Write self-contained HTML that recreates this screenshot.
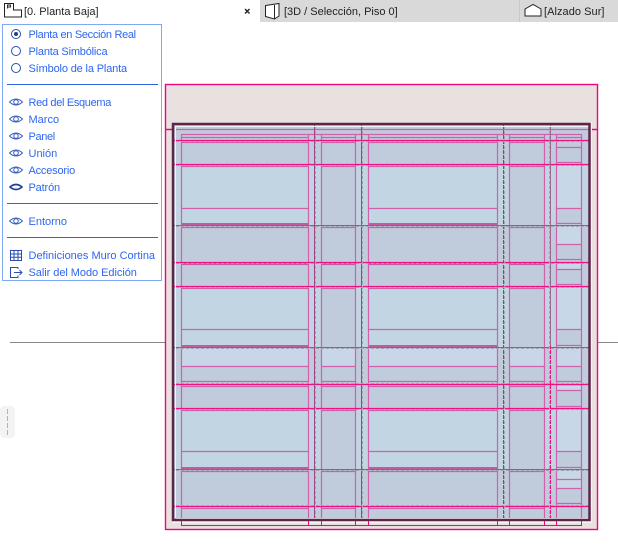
<!DOCTYPE html>
<html><head><meta charset="utf-8">
<style>
html,body{margin:0;padding:0;background:#fff;width:618px;height:559px;overflow:hidden}
body{position:relative;font-family:"Liberation Sans",sans-serif;font-size:11px}
.t{position:absolute;line-height:14px;white-space:nowrap}
.m{color:#2d66f0;left:28.5px}
.k{color:#222}
svg{position:absolute;left:0;top:0}
</style></head><body>
<svg width="618" height="559" viewBox="0 0 618 559" fill="none" shape-rendering="crispEdges">
<rect x="260" y="0" width="358" height="22" fill="#d9d9d9"/>
<rect x="519" y="0" width="1" height="22" fill="#c8c8c8"/>
<path d="M10 342.500H165M598 342.500H618" stroke="#888"/>
<rect x="165.500" y="84.500" width="432" height="445" fill="#e9e1e0" stroke="#f0047f" stroke-width="1.400" shape-rendering="geometricPrecision"/>
<path d="M166 129.500H172M591 129.500H597" stroke="#f0047f" stroke-width="1.400" shape-rendering="geometricPrecision"/>
<path d="M591 122V522H172" stroke="#f7f3f3" stroke-width="2"/>
<rect x="174" y="125" width="415" height="394" fill="#c0ccdc"/>
<!-- light rows -->
<g fill="#c2d5e3">
<rect x="176" y="166" width="145" height="59"/><rect x="356" y="166" width="153" height="59"/><rect x="545" y="166" width="44" height="59"/>
<rect x="176" y="288" width="145" height="59"/><rect x="356" y="288" width="153" height="59"/><rect x="545" y="288" width="44" height="59"/>
<rect x="176" y="410" width="145" height="59"/><rect x="356" y="410" width="153" height="59"/><rect x="545" y="410" width="44" height="59"/>
</g>
<g fill="#c8d7e7">
<rect x="182" y="349" width="126" height="17"/><rect x="322" y="349" width="33" height="17"/><rect x="369" y="349" width="128" height="17"/><rect x="510" y="349" width="34" height="17"/><rect x="557" y="349" width="24" height="17"/>
<rect x="557" y="166" width="24" height="42"/><rect x="557" y="227" width="24" height="17"/><rect x="557" y="264" width="24" height="5"/>
<rect x="557" y="288" width="24" height="41"/><rect x="557" y="386" width="24" height="4"/><rect x="557" y="410" width="24" height="41"/><rect x="557" y="471" width="24" height="17"/>
</g>
<g fill="#c0ccdc">
<rect x="557" y="208" width="24" height="15"/><rect x="557" y="329" width="24" height="16"/><rect x="557" y="451" width="24" height="16"/>
</g>
<!-- panel lines -->
<g stroke="#d060ac" stroke-width="1.200" shape-rendering="geometricPrecision">
<path d="M176 129.500H589"/>
<path d="M181.500 134.500H581.500"/>
<path d="M181.500 134V519M308.500 134V519M321.500 134V519M355.500 134V519M368.500 134V519M497.500 134V519M509.500 134V519M544.500 134V519M556.500 134V519M581.500 134V519"/>
<path d="M182 137.500H308M322 137.500H355M369 137.500H497M510 137.500H544M557 137.500H581"/>
<path d="M182 142.500H308M322 142.500H355M369 142.500H497M510 142.500H544"/>
<path d="M182 166.500H308M322 166.500H355M369 166.500H497M510 166.500H544"/>
<path d="M182 208.500H308M369 208.500H497M557 208.500H581"/>
<path d="M182 227.500H308M322 227.500H355M369 227.500H497M510 227.500H544"/>
<path d="M182 264.500H308M322 264.500H355M369 264.500H497M510 264.500H544"/>
<path d="M182 288.500H308M322 288.500H355M369 288.500H497M510 288.500H544"/>
<path d="M182 329.500H308M369 329.500H497M557 329.500H581"/>
<path d="M182 366.500H308M322 366.500H355M369 366.500H497M510 366.500H544M557 366.500H581"/>
<path d="M182 381.500H308M322 381.500H355M369 381.500H497M510 381.500H544M557 381.500H581"/>
<path d="M182 386.500H308M322 386.500H355M369 386.500H497M510 386.500H544"/>
<path d="M182 410.500H308M322 410.500H355M369 410.500H497M510 410.500H544"/>
<path d="M182 451.500H308M369 451.500H497M557 451.500H581"/>
<path d="M182 471.500H308M322 471.500H355M369 471.500H497M510 471.500H544"/>
<path d="M182 508.500H308M322 508.500H355M369 508.500H497M510 508.500H544"/>
<path d="M557 147.500H581M557 162.500H581M557 223.500H581M557 244.500H581M557 259.500H581M557 269.500H581M557 284.500H581M557 345.500H581M557 390.500H581M557 406.500H581M557 467.500H581M557 479.500H581M557 488.500H581M557 503.500H581"/>
</g>
<g stroke="#c55aa4" stroke-width="2">
<path d="M182 224H308M369 224H497M182 346H308M369 346H497M182 468H308M369 468H497"/>
<path d="M182 264H308M322 264H355M369 264H497M510 264H544"/>
</g>
<!-- grid lines -->
<g stroke="#f01080" stroke-width="1.300" shape-rendering="geometricPrecision">
<path d="M174 140.500H589M174 164.500H589M174 262.500H589M174 286.500H589M174 384.500H589M174 408.500H589M174 506.500H589"/>
</g>
<path d="M174 225.500H589M174 347.500H589M174 469.500H589" stroke="#9a5a8c"/>
<path d="M314.500 125V519" stroke="#a04585"/>
<path d="M361.500 125V150M361.500 228V519" stroke="#c8307f"/>
<path d="M361.500 150V228" stroke="#a04585"/>
<path d="M503.500 125V519" stroke="#ee1080" stroke-dasharray="4 1"/>
<path d="M550.500 125V345" stroke="#9a6a90"/>
<path d="M550.500 345V519" stroke="#ee1080" stroke-dasharray="4 1"/>
<!-- gray dashed -->
<g stroke="#a4a4ae" stroke-dasharray="3 2">
<path d="M176 141.500H589M176 165.500H589M176 226.500H589M176 263.500H589M176 287.500H589M176 348.500H589M176 383.500H589M176 409.500H589M176 470.500H589M176 505.500H589"/>
<path d="M315.500 126V518M362.500 126V518M504.500 126V518M549.500 126V518"/>
</g>
<!-- frame -->
<path d="M175.500 518V126.500H589" stroke="#f1f4f8"/>
<path d="M176 518.500H588" stroke="#f1f4f8" />
<rect x="173" y="124" width="416.500" height="396" stroke="#5f2548" stroke-width="2.500" shape-rendering="geometricPrecision"/>
<!-- dimension -->
<path d="M181.500 521V525.500H581.500V521M308.500 521V525M321.500 521V525M355.500 521V525M368.500 521V525M497.500 521V525M509.500 521V525M544.500 521V525M556.500 521V525" stroke="#f0047f"/>
<!-- side panel -->
<rect x="2.500" y="24.500" width="159" height="256" fill="#fff" stroke="#7fa8f5"/>
<path d="M7 84.500H158M7 203.500H158M7 237.500H158" stroke="#2e62e0"/>
<rect x="0" y="406" width="15" height="32" rx="4" fill="#f3f3f3"/>
<path d="M7.500 409V437" stroke="#e0a878" stroke-dasharray="5 2"/>
<g shape-rendering="geometricPrecision">
<!-- radios -->
<g stroke="#2a4fb0" stroke-width="1">
<circle cx="16" cy="34" r="4.500"/><circle cx="16" cy="51" r="4.500"/><circle cx="16" cy="68" r="4.500"/>
</g>
<circle cx="16" cy="34" r="2" fill="#26407f"/>
<!-- eyes -->
<g stroke="#3a60bd" stroke-width="1">
<path d="M9.500 102Q16 96 22.500 102Q16 108 9.500 102Z"/><circle cx="16" cy="102" r="2.300"/>
<path d="M9.500 119Q16 113 22.500 119Q16 125 9.500 119Z"/><circle cx="16" cy="119" r="2.300"/>
<path d="M9.500 136Q16 130 22.500 136Q16 142 9.500 136Z"/><circle cx="16" cy="136" r="2.300"/>
<path d="M9.500 153Q16 147 22.500 153Q16 159 9.500 153Z"/><circle cx="16" cy="153" r="2.300"/>
<path d="M9.500 170Q16 164 22.500 170Q16 176 9.500 170Z"/><circle cx="16" cy="170" r="2.300"/>
<path d="M9.500 221Q16 215 22.500 221Q16 227 9.500 221Z"/><circle cx="16" cy="221" r="2.300"/>
<path d="M10 187Q16 182 22 187Q16 192 10 187Z" stroke="#1f3f9a" stroke-width="1.600"/>
<!-- grid icon -->
<path d="M10.500 250.500H21.500V260.500H10.500ZM10.500 254H21.500M10.500 257.300H21.500M14 250.500V260.500M18 250.500V260.500" stroke="#2a4fb0"/>
<!-- exit icon -->
<path d="M18 269V267.500H10.500V277.500H18V275.500M14 272.500H22M19.500 270L22 272.500L19.500 275" stroke="#2a4fb0"/>
</g>
<!-- tab icons -->
<g stroke="#222" stroke-width="1">
<path d="M4.500 3.500H13.500V10H21.500V17H4.500Z" fill="#fff"/>
<path d="M7.500 8.500V5H10.500V7H7.500" stroke-width=".9"/>
<path d="M265.500 5.500L279 3.500V16L274.500 19L265.500 16.500Z" fill="#fff"/>
<path d="M274.500 19V5"/>
<path d="M525 9L533 4.500L541 9V16H525Z" fill="#fff"/>
</g>
<path d="M245 9L249.500 13.500M249.500 9L245 13.500" stroke="#222" stroke-width="1.400"/>
</g>
</svg>
<div class="t k" style="left:24px;top:5px">[0. Planta Baja]</div>
<div class="t k" style="left:284px;top:5px">[3D / Selección, Piso 0]</div>
<div class="t k" style="left:544px;top:5px;letter-spacing:.05px">[Alzado Sur]</div>
<div class="t m" style="top:28px;letter-spacing:-.32px">Planta en Sección Real</div>
<div class="t m" style="top:45px;letter-spacing:-.19px">Planta Simbólica</div>
<div class="t m" style="top:62px;letter-spacing:-.15px">Símbolo de la Planta</div>
<div class="t m" style="top:96px;letter-spacing:-.33px">Red del Esquema</div>
<div class="t m" style="top:113px">Marco</div>
<div class="t m" style="top:130px;letter-spacing:-.35px">Panel</div>
<div class="t m" style="top:147px">Unión</div>
<div class="t m" style="top:164px;letter-spacing:-.2px">Accesorio</div>
<div class="t m" style="top:181px;letter-spacing:-.15px">Patrón</div>
<div class="t m" style="top:215px">Entorno</div>
<div class="t m" style="top:249px">Definiciones Muro Cortina</div>
<div class="t m" style="top:266px;letter-spacing:-.05px">Salir del Modo Edición</div>
</body></html>
